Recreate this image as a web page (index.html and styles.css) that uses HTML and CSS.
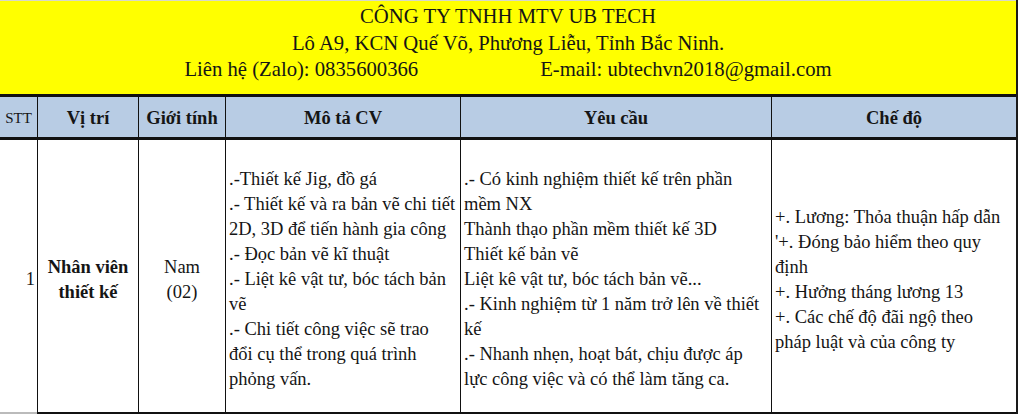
FILE: index.html
```html
<!DOCTYPE html>
<html lang="vi">
<head>
<meta charset="utf-8">
<title>UB TECH</title>
<link rel="stylesheet" href="styles.css">
</head>
<body>
<div class="sheet">
  <div class="banner">
    <div class="line">CÔNG TY TNHH MTV UB TECH</div>
    <div class="line">Lô A9, KCN Quế Võ, Phương Liễu, Tỉnh Bắc Ninh.</div>
    <div class="line contact"><span>Liên hệ (Zalo): 0835600366</span><span>E-mail: ubtechvn2018@gmail.com</span></div>
  </div>
  <div class="grid">
    <div class="hd stt">STT</div>
    <div class="hd">Vị trí</div>
    <div class="hd">Giới tính</div>
    <div class="hd">Mô tả CV</div>
    <div class="hd">Yêu cầu</div>
    <div class="hd">Chế độ</div>

    <div class="cell num">1</div>
    <div class="cell center bold">Nhân viên<br>thiết kế</div>
    <div class="cell center">Nam<br>(02)</div>
    <div class="cell text">.-Thiết kế Jig, đồ gá<br>.- Thiết kế và ra bản vẽ chi tiết<br>2D, 3D để tiến hành gia công<br>.- Đọc bản vẽ kĩ thuật<br>.- Liệt kê vật tư, bóc tách bản<br>vẽ<br>.- Chi tiết công việc sẽ trao<br>đổi cụ thể trong quá trình<br>phỏng vấn.</div>
    <div class="cell text">.- Có kinh nghiệm thiết kế trên phần<br>mềm NX<br>Thành thạo phần mềm thiết kế 3D<br>Thiết kế bản vẽ<br>Liệt kê vật tư, bóc tách bản vẽ...<br>.- Kinh nghiệm từ 1 năm trở lên về thiết<br>kế<br>.- Nhanh nhẹn, hoạt bát, chịu được áp<br>lực công việc và có thể làm tăng ca.</div>
    <div class="cell text">+. Lương: Thỏa thuận hấp dẫn<br>'+. Đóng bảo hiểm theo quy<br>định<br>+. Hưởng tháng lương 13<br>+. Các chế độ đãi ngộ theo<br>pháp luật và của công ty</div>
  </div>
</div>
</body>
</html>
```
FILE: styles.css
```css
html, body {
  margin: 0;
  padding: 0;
  background: #fff;
}
body {
  width: 1019px;
  height: 418px;
  overflow: hidden;
  font-family: "Liberation Serif", "Times New Roman", serif;
  color: #151515;
}
.sheet {
  width: 1016px;
  border-right: 2px solid #1a1a1a;
}
.banner {
  height: 97px;
  box-sizing: border-box;
  padding-top: 2px;
  background: #ffff00;
  border-top: 1px solid #d8d8c8;
  border-bottom: 3px solid #111;
  text-align: center;
  font-size: 20.7px;
  line-height: 26.5px;
}
.contact {
  display: flex;
  justify-content: center;
  gap: 122px;
}
.grid {
  display: grid;
  grid-template-columns: 37px 101px 87px 235px 311px 245px;
  grid-template-rows: 43px 274px;
}
.hd {
  background: #b8cce4;
  border-bottom: 3px solid #111;
  border-left: 1.5px solid #111;
  padding-top: 3px;
  display: flex;
  align-items: center;
  justify-content: center;
  font-weight: bold;
  font-size: 18.5px;
}
.hd.stt {
  border-left: none;
  font-weight: normal;
  font-size: 15px;
}
.cell {
  border-left: 1.5px solid #111;
  border-bottom: 2px solid #111;
  padding-top: 7px;
  display: flex;
  align-items: center;
  font-size: 18.5px;
  line-height: 25px;
  white-space: nowrap;
}
.num {
  border-left: none;
  border-bottom-color: #bbb;
  justify-content: flex-end;
  padding-right: 2px;
}
.center {
  justify-content: center;
  text-align: center;
}
.bold {
  font-weight: bold;
}
.text {
  padding-left: 3px;
  padding-right: 2px;
  display: block;
  align-content: center;
  overflow: hidden;
}
```
